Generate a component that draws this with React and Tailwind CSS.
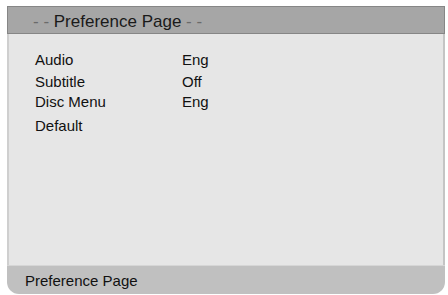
export default function App() {
  const rows = [
    { label: "Audio", value: "Eng", mt: "mt-0" },
    { label: "Subtitle", value: "Off", mt: "mt-[4px]" },
    { label: "Disc Menu", value: "Eng", mt: "mt-[2px]" },
    { label: "Default", value: "", mt: "mt-[6px]" },
  ];
  return (
    <div
      className="w-[448px] h-[295px] bg-white pl-[7px] pt-[6px]"
      style={{ fontFamily: '"Liberation Sans", Arial, sans-serif' }}
    >
      <div className="w-[438px] h-[288px] flex flex-col">
        <div className="h-[28px] border border-[#868686] bg-[#a6a6a6] pl-[25px] pt-[5px]">
          <div className="text-[17px] leading-[20px] text-[#1a1a1a]">
            <span className="text-[#6a6a6a]">- - </span>Preference Page<span className="text-[#6a6a6a]"> - -</span>
          </div>
        </div>
        <div className="flex-1 bg-[#e6e6e6] border-l-[2px] border-r-[2px] border-l-[#cfcfcf] border-r-[#c4c4c4] pt-[17px] pl-[26px]">
          {rows.map((r) => (
            <div key={r.label} className={`flex text-[15px] leading-[18px] text-[#111] ${r.mt}`}>
              <span className="w-[147px]">{r.label}</span>
              <span>{r.value}</span>
            </div>
          ))}
        </div>
        <div className="h-[29px] bg-[#c0c0c0] rounded-b-[12px] pl-[18px] pt-[6px] border-t border-[#d6d6d6]">
          <div className="text-[15px] leading-[18px] text-[#111]">Preference Page</div>
        </div>
      </div>
    </div>
  );
}
